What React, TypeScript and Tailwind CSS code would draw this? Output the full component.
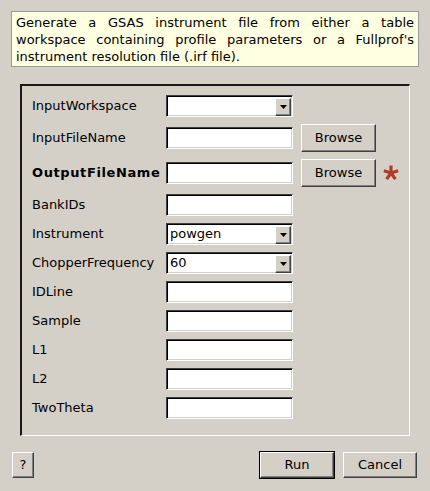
const font = { fontFamily: '"DejaVu Sans", "Liberation Sans", sans-serif' }

function Field({ value }: { value?: string }) {
    return (
        <div className="w-[127px] h-[22px] bg-white border-t border-l border-t-[#404040] border-l-[#404040] border-b border-r border-b-white border-r-white shadow-[inset_1px_1px_0_#000,inset_-1px_-1px_0_#d4d0c8] flex items-center pl-[4px] text-[13px] text-black">
            {value}
        </div>
    )
}

function Combo({ value }: { value?: string }) {
    return (
        <div className="w-[127px] h-[22px] bg-white border-t border-l border-t-[#404040] border-l-[#404040] border-b border-r border-b-white border-r-white shadow-[inset_1px_1px_0_#000,inset_-1px_-1px_0_#d4d0c8] flex items-center pl-[3px] pr-[1px] text-[13px] text-black">
            <span className="flex-1">{value}</span>
            <div className="w-[16px] h-[18px] mt-[1px] bg-[#d4d0c8] border-t border-l border-t-white border-l-white border-b border-r border-b-[#404040] border-r-[#404040] shadow-[inset_-1px_-1px_0_#808080] flex items-center justify-center">
                <svg width="7" height="4" viewBox="0 0 7 4">
                    <path d="M0 0 H7 L3.5 4 Z" fill="#000" />
                </svg>
            </div>
        </div>
    )
}

function Btn({ label, w, h = 'h-[26px]' }: { label: string; w: string; h?: string }) {
    return (
        <div className={`${w} ${h} bg-[#d4d0c8] border-t border-l border-t-white border-l-white border-b border-r border-b-[#404040] border-r-[#404040] shadow-[inset_-1px_-1px_0_#808080] flex items-center justify-center text-[13px] text-black`}>
            {label}
        </div>
    )
}

function Star() {
    const arms = [-90, -18, 54, 126, 198]
    return (
        <svg width="16" height="16" viewBox="-8 -8 16 16" className="ml-[7px]">
            {arms.map((a) => (
                <line
                    key={a}
                    x1="0"
                    y1="0"
                    x2={(7.5 * Math.cos((a * Math.PI) / 180)).toFixed(2)}
                    y2={(7.5 * Math.sin((a * Math.PI) / 180)).toFixed(2)}
                    stroke="#b23a2a"
                    strokeWidth="3.2"
                    strokeLinecap="butt"
                />
            ))}
        </svg>
    )
}

type Row = { label: string; kind: 'field' | 'combo'; value?: string; browse?: boolean; bold?: boolean }

const rows: Row[] = [
    { label: 'InputWorkspace', kind: 'combo' },
    { label: 'InputFileName', kind: 'field', browse: true },
    { label: 'OutputFileName', kind: 'field', browse: true, bold: true },
    { label: 'BankIDs', kind: 'field' },
    { label: 'Instrument', kind: 'combo', value: 'powgen' },
    { label: 'ChopperFrequency', kind: 'combo', value: '60' },
    { label: 'IDLine', kind: 'field' },
    { label: 'Sample', kind: 'field' },
    { label: 'L1', kind: 'field' },
    { label: 'L2', kind: 'field' },
    { label: 'TwoTheta', kind: 'field' },
]

export default function App() {
    return (
        <div className="w-[430px] h-[491px] bg-[#d4d0c8] flex flex-col pt-[11px] px-[11px] text-black" style={font}>
            <div className="h-[56px] bg-[#ffffe1] border border-[#9a9a9a] pl-[4px] pr-[4px] pt-[2px] text-[13px] leading-[17px] text-justify">
                Generate a GSAS instrument file from either a table workspace containing profile parameters or a Fullprof's instrument resolution file (.irf file).
            </div>

            <div className="mt-[17px] mx-[9px] border-t-2 border-l-2 border-t-[#1a1a1a] border-l-[#1a1a1a] border-b border-r border-b-white border-r-white pt-[9px] pb-[16px] pl-[10px] flex flex-col gap-[7px]">
                {rows.map((r) => (
                    <div key={r.label} className={`flex items-center ${r.browse ? 'h-[28px]' : 'h-[22px]'}`}>
                        <div className={`w-[134px] text-[13px] ${r.bold ? 'font-bold tracking-[0.6px]' : ''}`}>{r.label}</div>
                        {r.kind === 'combo' ? <Combo value={r.value} /> : <Field value={r.value} />}
                        {r.browse && (
                            <div className="ml-[8px]">
                                <Btn label="Browse" w="w-[75px]" h="h-[28px]" />
                            </div>
                        )}
                        {r.bold && <Star />}
                    </div>
                ))}
            </div>

            <div className="mt-[15px] ml-[1px] mr-[2px] flex items-center">
                <Btn label="?" w="w-[22px]" />
                <div className="flex-1" />
                <div className="border border-black">
                    <Btn label="Run" w="w-[74px]" />
                </div>
                <div className="ml-[8px]">
                    <Btn label="Cancel" w="w-[74px]" />
                </div>
            </div>
        </div>
    )
}
